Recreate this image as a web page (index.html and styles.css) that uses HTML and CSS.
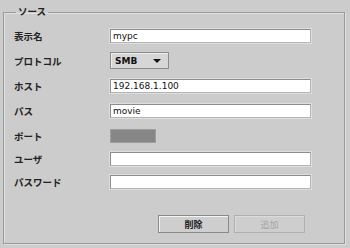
FILE: index.html
```html
<!DOCTYPE html>
<html lang="ja">
<head>
    <meta charset="UTF-8">
    <title>ソース</title>
    <link rel="stylesheet" href="styles.css">
</head>
<body>
    <fieldset class="source-box">
        <legend class="source-title">ソース</legend>

        <div class="form-grid">
            <label class="field-label">表示名</label>
            <div class="field"><input type="text" class="text-input" value="mypc"></div>

            <label class="field-label">プロトコル</label>
            <div class="field">
                <div class="select-box">
                    <span>SMB</span>
                    <span class="select-arrow"></span>
                </div>
            </div>

            <label class="field-label">ホスト</label>
            <div class="field"><input type="text" class="text-input" value="192.168.1.100"></div>

            <label class="field-label">パス</label>
            <div class="field"><input type="text" class="text-input" value="movie"></div>

            <label class="field-label">ポート</label>
            <div class="field"><div class="port-box"></div></div>

            <label class="field-label">ユーザ</label>
            <div class="field"><input type="text" class="text-input" value=""></div>

            <label class="field-label">パスワード</label>
            <div class="field"><input type="password" class="text-input" value=""></div>
        </div>

        <div class="button-row">
            <button class="action-btn">削除</button>
            <button class="action-btn" disabled>追加</button>
        </div>
    </fieldset>
</body>
</html>
```

FILE: styles.css
```css
* {
    margin: 0;
    padding: 0;
    box-sizing: border-box;
}

body {
    width: 350px;
    height: 248px;
    background: #cccccc;
    font-family: "DejaVu Sans", "Noto Sans CJK JP", sans-serif;
    color: #1a1a1a;
    padding: 6px 5px 4px 3px;
    overflow: hidden;
}

.source-box {
    height: 238px;
    border: 1px solid #9a9a9a;
    box-shadow: inset 1px 1px 0 #e0e0e0, 1px 1px 0 #e0e0e0;
    padding: 0 0 0 10px;
    position: relative;
}

.source-title {
    margin-left: 2px;
    padding: 0 2px;
    font-family: "Noto Sans CJK JP", sans-serif;
    font-size: 9.5px;
    font-weight: bold;
    line-height: 12px;
    color: #222;
    position: relative;
    top: -1px;
}

.form-grid {
    display: grid;
    grid-template-columns: 96px 201px;
    grid-template-rows: 24px 25px 25px 26px 24px 22px 23px;
    margin-top: 6px;
    align-items: center;
}

.field-label {
    font-family: "Noto Sans CJK JP", sans-serif;
    font-size: 9.5px;
    font-weight: bold;
    color: #222;
    line-height: 12px;
}

.field {
    display: flex;
    align-items: center;
}

.text-input {
    width: 201px;
    height: 14px;
    border: 1px solid #8c8c8c;
    border-right-color: #b5b5b5;
    border-bottom-color: #b5b5b5;
    box-shadow: 0 0 0 1px #dedede;
    background: white;
    font-family: "DejaVu Sans", sans-serif;
    font-size: 9px;
    padding: 0 2px;
    color: #111;
    outline: none;
}

.select-box {
    width: 59px;
    height: 17px;
    border: 1px solid #8c8c8c;
    box-shadow: inset 1px 1px 0 #eeeeee;
    background: #d6d6d6;
    display: flex;
    align-items: center;
    justify-content: space-between;
    padding: 0 7px 0 4px;
    font-size: 9px;
    font-weight: bold;
    color: #111;
}

.select-arrow {
    width: 0;
    height: 0;
    border-left: 4px solid transparent;
    border-right: 4px solid transparent;
    border-top: 4px solid #111;
}

.port-box {
    width: 46px;
    height: 14px;
    background: #878787;
    border: 1px solid #9e9e9e;
}

.button-row {
    display: flex;
    gap: 5px;
    margin: 22px 0 0 144px;
}

.action-btn {
    width: 71px;
    height: 18px;
    background: #cecece;
    border: 1px solid #8a8a8a;
    box-shadow: inset 1px 1px 0 #f4f4f4;
    font-family: "Noto Sans CJK JP", sans-serif;
    font-size: 9px;
    font-weight: bold;
    color: #222;
}

.action-btn:disabled {
    border-color: #b0b0b0;
    color: #a6a6a6;
    font-weight: normal;
    box-shadow: inset 1px 1px 0 #dcdcdc;
}
```
